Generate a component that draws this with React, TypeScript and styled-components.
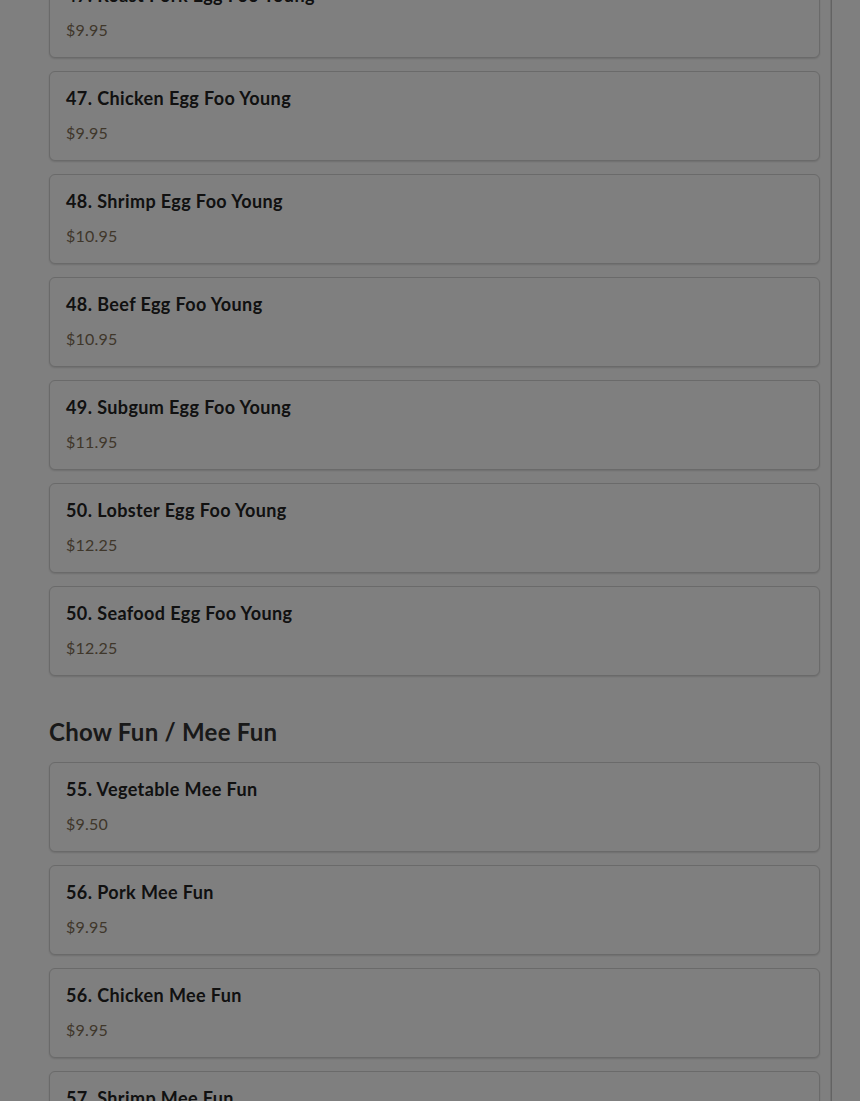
import React from "react";
import styled, { createGlobalStyle } from "styled-components";

const Global = createGlobalStyle`
  html, body { margin: 0; padding: 0; background: #ffffff; }
  body { font-family: "Lato", "Noto Sans", sans-serif; color: #333333; overflow: hidden; }
  * { box-sizing: border-box; }
`;

const Page = styled.div`
  display: grid;
  grid-template-columns: 832px 1fr;
  min-height: 1101px;
  height: 1101px;
  overflow: hidden;
`;

const Main = styled.main`
  border-right: 1px solid #c6c6c6;
  box-shadow: inset -6px 0 0 -5px #e4e4e4;
  padding: 0 11px 0 49px;
`;

const Content = styled.div`
  margin-top: -32px;
  display: flex;
  flex-direction: column;
`;

const Section = styled.section`
  display: flex;
  flex-direction: column;
  gap: 13px;
`;

const SectionTitle = styled.h2`
  margin: 41px 0 15px;
  font-size: 24px;
  line-height: 30px;
  font-weight: 700;
  letter-spacing: 0.25px;
  color: #333333;
`;

const Card = styled.div`
  border: 1px solid #d4d4d4;
  border-radius: 6px;
  background: #ffffff;
  box-shadow: 0 1px 2px rgba(0, 0, 0, 0.14);
  padding: 15px 16px 16px 16px;
  display: flex;
  flex-direction: column;
  gap: 13px;
`;

const ItemName = styled.div`
  font-size: 18px;
  line-height: 22px;
  font-weight: 700;
  letter-spacing: 0.4px;
  color: #222222;
`;

const Price = styled.div`
  font-size: 16px;
  line-height: 22px;
  letter-spacing: 0.2px;
  color: #7f6e56;
`;

const Overlay = styled.div`
  position: fixed;
  inset: 0;
  background: rgba(0, 0, 0, 0.5);
`;

type Item = { name: string; price: string };

const eggFooYoung: Item[] = [
  { name: "47. Roast Pork Egg Foo Young", price: "$9.95" },
  { name: "47. Chicken Egg Foo Young", price: "$9.95" },
  { name: "48. Shrimp Egg Foo Young", price: "$10.95" },
  { name: "48. Beef Egg Foo Young", price: "$10.95" },
  { name: "49. Subgum Egg Foo Young", price: "$11.95" },
  { name: "50. Lobster Egg Foo Young", price: "$12.25" },
  { name: "50. Seafood Egg Foo Young", price: "$12.25" },
];

const meeFun: Item[] = [
  { name: "55. Vegetable Mee Fun", price: "$9.50" },
  { name: "56. Pork Mee Fun", price: "$9.95" },
  { name: "56. Chicken Mee Fun", price: "$9.95" },
  { name: "57. Shrimp Mee Fun", price: "$9.95" },
];

const ItemCard = ({ item }: { item: Item }) => (
  <Card>
    <ItemName>{item.name}</ItemName>
    <Price>{item.price}</Price>
  </Card>
);

export default function App() {
  return (
    <>
      <Global />
      <Page>
        <Main>
          <Content>
            <Section>
              {eggFooYoung.map((it, i) => (
                <ItemCard key={i} item={it} />
              ))}
            </Section>
            <SectionTitle>Chow Fun / Mee Fun</SectionTitle>
            <Section>
              {meeFun.map((it, i) => (
                <ItemCard key={i} item={it} />
              ))}
            </Section>
          </Content>
        </Main>
        <div />
      </Page>
      <Overlay />
    </>
  );
}
